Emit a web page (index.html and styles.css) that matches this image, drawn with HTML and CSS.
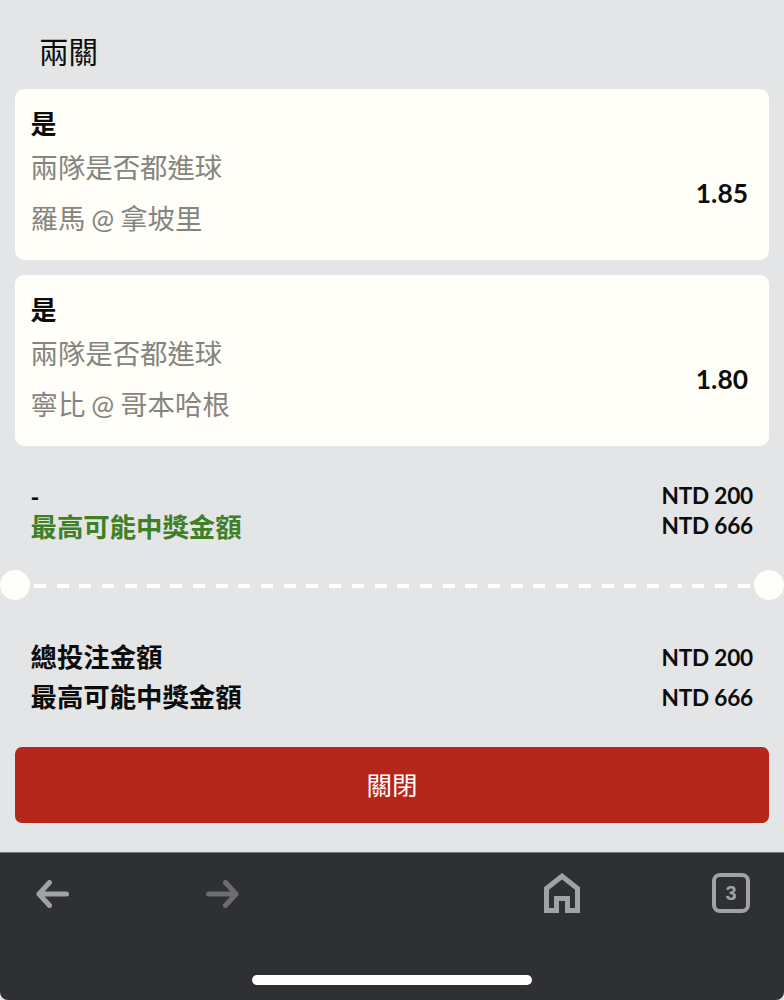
FILE: index.html
```html
<!DOCTYPE html>
<html lang="zh-Hant">
<head>
<meta charset="utf-8">
<title>兩關</title>
<link rel="stylesheet" href="styles.css">
</head>
<body>
<main class="page">
  <h1 class="title">兩關</h1>
  <section class="card">
    <div class="card-text">
      <div class="pick">是</div>
      <div class="market">兩隊是否都進球</div>
      <div class="match">羅馬 @ 拿坡里</div>
    </div>
    <div class="odds">1.85</div>
  </section>
  <section class="card second">
    <div class="card-text">
      <div class="pick">是</div>
      <div class="market">兩隊是否都進球</div>
      <div class="match">寧比 @ 哥本哈根</div>
    </div>
    <div class="odds">1.80</div>
  </section>
  <section class="summary">
    <div class="row row-dash"><span class="dash">-</span><span class="amount">NTD 200</span></div>
    <div class="row row-win"><span class="label green">最高可能中獎金額</span><span class="amount">NTD 666</span></div>
  </section>
  <div class="divider"><span class="notch"></span><span class="dashes"></span><span class="notch"></span></div>
  <section class="totals">
    <div class="row row-total"><span class="label">總投注金額</span><span class="amount">NTD 200</span></div>
    <div class="row row-total"><span class="label">最高可能中獎金額</span><span class="amount">NTD 666</span></div>
  </section>
  <button class="close">關閉</button>
</main>
<footer class="toolbar">
  <div class="tools">
    <svg class="icon back" width="33" height="28" viewBox="0 0 33 28"><path d="M13.500 2.500 3 14 13.500 25.500M3 14H30.500" fill="none" stroke="#a0a2a6" stroke-width="5" stroke-linecap="round" stroke-linejoin="round"/></svg>
    <svg class="icon forward" width="33" height="28" viewBox="0 0 33 28"><path d="M19.500 2.500 30 14 19.500 25.500M30 14H2.500" fill="none" stroke="#6c6d71" stroke-width="5" stroke-linecap="round" stroke-linejoin="round"/></svg>
    <svg class="icon home" width="36" height="40" viewBox="0 0 36 40"><path d="M2.500 37.500V15.500L18 3.200 33.500 15.500V37.500H23.500V25.500H12.500V37.500Z" fill="none" stroke="#a0a2a6" stroke-width="5"/></svg>
    <div class="tabs">3</div>
  </div>
  <div class="home-bar"></div>
</footer>
</body>
</html>
```

FILE: styles.css
```css
* { box-sizing: border-box; }
html, body { margin: 0; padding: 0; }
body {
  width: 784px;
  height: 1000px;
  overflow: hidden;
  background: #e4e5e7;
  font-family: Lato, "Noto Sans CJK TC", sans-serif;
  color: #0c0c0c;
  display: flex;
  flex-direction: column;
}
.page { height: 852px; padding: 0 15px; }
.title {
  margin: 0;
  height: 89px;
  padding: 32px 0 0 24px;
  font-size: 29.500px;
  line-height: 40px;
  font-weight: 400;
}
.card {
  height: 171px;
  background: #fffef8;
  border-radius: 9px;
  padding: 17px 21px 0 15.500px;
  display: flex;
  justify-content: space-between;
  align-items: center;
}
.second { margin-top: 15px; }
.card-text { align-self: flex-start; }
.pick { font-size: 26px; line-height: 36px; font-weight: 700; }
.market, .match { font-size: 27.400px; line-height: 38px; color: #85857f; }
.market { margin-top: 7px; }
.match { margin-top: 13px; word-spacing: -1px; }
.odds { font-size: 26.400px; line-height: 36px; font-weight: 700; margin-top: 20px; }
.row { display: flex; justify-content: space-between; align-items: center; padding: 0 16px 0 15.500px; }
.summary { padding-top: 34px; height: 124px; }
.row-dash { height: 30px; }
.row-win { height: 31px; }
.dash { font-size: 24px; font-weight: 700; line-height: 30px; margin-top: 4px; }
.label { font-size: 26.400px; font-weight: 700; line-height: 36px; }
.green { color: #3f7f26; margin-top: 2px; }
.amount { font-size: 22.600px; font-weight: 700; letter-spacing: -0.200px; }
.divider {
  display: flex;
  align-items: center;
  gap: 4px;
  height: 30px;
  margin: 0 -15px;
}
.notch { width: 30px; height: 30px; border-radius: 50%; background: #fffef8; flex: none; }
.dashes {
  flex: 1;
  height: 4px;
  margin-top: 2px;
  background: repeating-linear-gradient(90deg, #fffef8 0 12px, transparent 12px 22.700px);
}
.totals { padding-top: 37px; height: 147px; }
.row-total { height: 40px; }
.close {
  display: block;
  width: 100%;
  height: 76px;
  border: 0;
  padding: 0 0 4px;
  border-radius: 7px;
  background: #b5271a;
  color: #fff;
  font-family: inherit;
  font-size: 25.500px;
  font-weight: 400;
}
.toolbar {
  flex: 1;
  background: #2f3034;
  border-top: 1px solid #77787c;
  border-radius: 0 0 8px 8px;
  display: flex;
  flex-direction: column;
  align-items: center;
}
.tools { width: 100%; height: 122px; display: flex; align-items: flex-start; padding-top: 20px; }
.icon { display: block; flex: none; }
.back { margin: 7px 0 0 36px; }
.forward { margin: 7px 0 0 137px; }
.home { margin: 0 0 0 305px; }
.tabs {
  width: 38px;
  height: 40px;
  margin-left: 132px;
  border: 4px solid #a0a2a6;
  border-radius: 8px;
  color: #a0a2a6;
  font-family: "Liberation Sans", sans-serif;
  font-size: 20px;
  font-weight: 700;
  line-height: 32px;
  text-align: center;
}
.home-bar { width: 280px; height: 10px; border-radius: 5px; background: #fff; }
```
